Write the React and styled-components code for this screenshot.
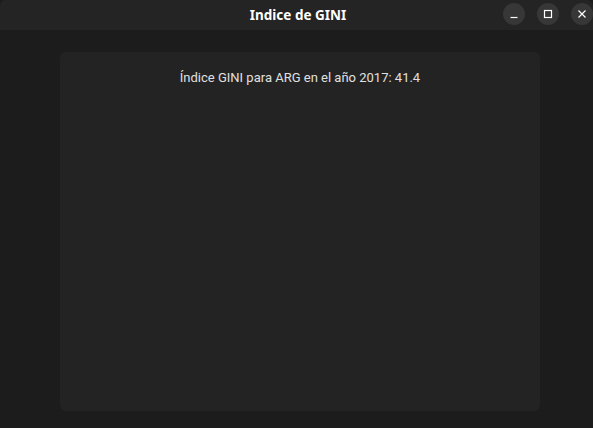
import React from "react";
import styled, { createGlobalStyle } from "styled-components";

const Global = createGlobalStyle`
  html, body { margin: 0; padding: 0; background: #1c1c1c; }
  #root { width: 593px; height: 428px; }
`;

const Window = styled.div`
  width: 593px;
  height: 428px;
  display: flex;
  flex-direction: column;
  background: #1c1c1c;
  overflow: hidden;
`;

const TitleBar = styled.div`
  height: 30px;
  flex: 0 0 30px;
  background: #242424;
  border-radius: 6px 6px 0 0;
  display: grid;
  grid-template-columns: 1fr auto 1fr;
  align-items: center;
`;

const Title = styled.div`
  grid-column: 2;
  font-family: "Noto Sans", "Open Sans", sans-serif;
  font-weight: 700;
  font-size: 13.5px;
  color: #ffffff;
  margin-left: 3px;
  margin-top: -1px;
`;

const Controls = styled.div`
  grid-column: 3;
  justify-self: end;
  display: flex;
  gap: 12px;
  margin-top: -3px;
`;

const CtlButton = styled.div`
  width: 22px;
  height: 22px;
  border-radius: 50%;
  background: #373737;
  display: flex;
  align-items: center;
  justify-content: center;
  color: #ffffff;
`;

const Body = styled.div`
  flex: 1;
  padding: 22px 53px 17px 60px;
  display: flex;
`;

const Card = styled.div`
  flex: 1;
  background: #232323;
  border-radius: 6px;
  display: flex;
  flex-direction: column;
  align-items: center;
  padding-top: 18px;
`;

const Label = styled.div`
  font-family: Roboto, "Liberation Sans", sans-serif;
  font-size: 13px;
  color: #e0e0e0;
  line-height: 16px;
`;

export default function App() {
  return (
    <>
      <Global />
      <Window>
        <TitleBar>
          <Title>Indice de GINI</Title>
          <Controls>
            <CtlButton>
              <svg width="10" height="10" viewBox="0 0 10 10">
                <path d="M1.5 8.5h7" stroke="#fff" strokeWidth="1.2" />
              </svg>
            </CtlButton>
            <CtlButton>
              <svg width="10" height="10" viewBox="0 0 10 10">
                <rect x="1.5" y="1.5" width="7" height="7" fill="none" stroke="#fff" strokeWidth="1.2" />
              </svg>
            </CtlButton>
            <CtlButton>
              <svg width="10" height="10" viewBox="0 0 10 10">
                <path d="M1.5 1.5l7 7M8.5 1.5l-7 7" stroke="#fff" strokeWidth="1.2" />
              </svg>
            </CtlButton>
          </Controls>
        </TitleBar>
        <Body>
          <Card>
            <Label>Índice GINI para ARG en el año 2017: 41.4</Label>
          </Card>
        </Body>
      </Window>
    </>
  );
}
